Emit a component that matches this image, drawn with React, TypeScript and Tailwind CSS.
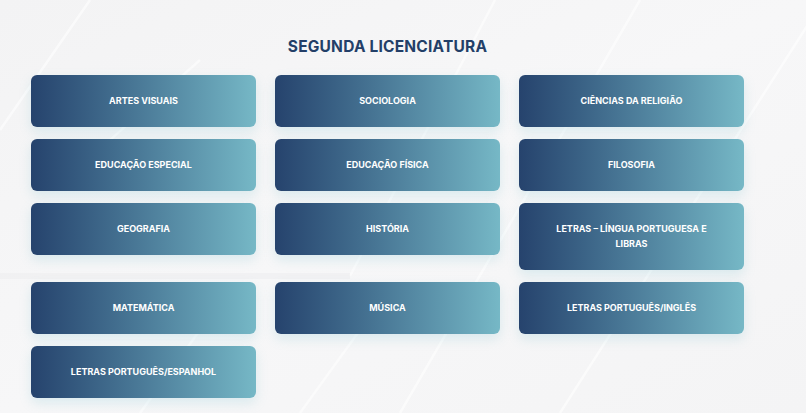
import React from "react";

const items = [
  "ARTES VISUAIS",
  "SOCIOLOGIA",
  "CIÊNCIAS DA RELIGIÃO",
  "EDUCAÇÃO ESPECIAL",
  "EDUCAÇÃO FÍSICA",
  "FILOSOFIA",
  "GEOGRAFIA",
  "HISTÓRIA",
  "LETRAS – LÍNGUA PORTUGUESA E LIBRAS",
  "MATEMÁTICA",
  "MÚSICA",
  "LETRAS PORTUGUÊS/INGLÊS",
  "LETRAS PORTUGUÊS/ESPANHOL",
];

export default function App() {
  return (
    <div
      className="relative w-[806px] h-[413px] overflow-hidden bg-gradient-to-br from-[#f3f3f4] via-[#f7f7f8] to-[#f4f4f5]"
      style={{ fontFamily: "Inter, 'Open Sans', sans-serif" }}
    >
      <svg
        className="absolute inset-0 pointer-events-none"
        width="806"
        height="413"
        viewBox="0 0 806 413"
      >
        <g stroke="#ffffff" strokeWidth="2.5" fill="none" opacity="0.6">
          <line x1="90" y1="0" x2="0" y2="130" />
          <line x1="495" y1="0" x2="350" y2="276" />
          <line x1="200" y1="60" x2="110" y2="140" />
          <line x1="830" y1="-10" x2="560" y2="413" />
          <line x1="640" y1="0" x2="400" y2="413" />
          <line x1="300" y1="413" x2="360" y2="330" />
          <line x1="140" y1="413" x2="200" y2="330" />
        </g>
        <rect x="0" y="273" width="350" height="6" fill="#ebebed" opacity="0.5" />
      </svg>
      <div className="relative ml-[31px] w-[713px] flex flex-col items-center pt-[37px]">
        <h1 className="text-[15.5px] leading-[20px] font-bold text-[#233f68] tracking-[0.2px]">
          SEGUNDA LICENCIATURA
        </h1>
        <div className="mt-[18px] grid grid-cols-[225px_225px_225px] gap-x-[19px] gap-y-[12px] items-start">
          {items.map((t) => (
            <div
              key={t}
              className="rounded-[6px] bg-gradient-to-r from-[#26436d] to-[#76b8c6] px-[30px] pt-[18px] pb-[19px] text-center text-white font-bold text-[9px] leading-[15px] shadow-[0_5px_12px_rgba(120,190,205,0.22)]"
            >
              {t}
            </div>
          ))}
        </div>
      </div>
    </div>
  );
}
